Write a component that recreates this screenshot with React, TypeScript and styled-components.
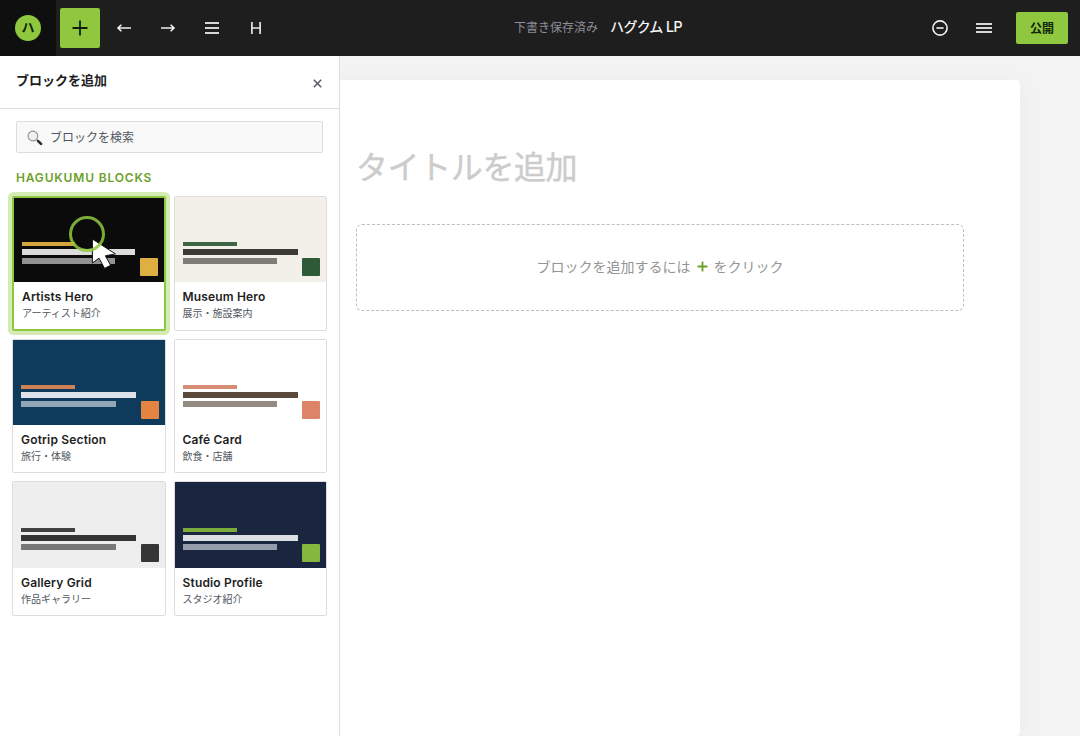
import React from "react";
import styled, { createGlobalStyle } from "styled-components";

const GlobalStyle = createGlobalStyle`
  *, *::before, *::after { box-sizing: border-box; }
  body {
    margin: 0;
    background: #f3f3f3;
    color: #1e1e1e;
    font-family: Inter, "Noto Sans CJK JP", sans-serif;
    font-size: 12px;
    overflow: hidden;
  }
  button { font: inherit; border: 0; padding: 0; background: none; color: inherit; }
`;

const Shell = styled.div`
  display: flex;
  flex-direction: column;
  height: 736px;
`;

const TopBar = styled.header`
  display: flex;
  justify-content: space-between;
  align-items: center;
  height: 56px;
  flex: none;
  background: #1e1e1e;
  color: #fff;
`;

const Tools = styled.div`
  display: flex;
  align-items: center;
  gap: 4px;
`;

const RightTools = styled(Tools)`
  padding-right: 12px;
`;

const LogoCell = styled.div`
  display: grid;
  place-items: center;
  width: 56px;
  height: 56px;
  background: #0f0f0f;
`;

const Logo = styled.div`
  display: grid;
  place-items: center;
  width: 26px;
  height: 26px;
  border-radius: 50%;
  background: #8fc73e;
  color: #10240a;
  font: 700 13px/24px "Noto Sans CJK JP", sans-serif;
  padding-bottom: 2px;
`;

const ToolButton = styled.button<{ $primary?: boolean }>`
  display: grid;
  place-items: center;
  width: 40px;
  height: 40px;
  border-radius: 2px;
  background: ${(p) => (p.$primary ? "#8fc73e" : "transparent")};
  color: ${(p) => (p.$primary ? "#0f1f08" : "#f0f0f0")};
  svg { display: block; }
`;

const DocInfo = styled.div`
  display: flex;
  align-items: center;
  gap: 12px;
`;

const SaveState = styled.span`
  color: #8c8f98;
  font-size: 12px;
  line-height: 18px;
`;

const DocName = styled.span`
  font-size: 14px;
  line-height: 20px;
  font-weight: 400;
  letter-spacing: -0.5px;
  padding-bottom: 2px;
  -webkit-text-stroke: 0.2px currentColor;
`;

const Publish = styled.button`
  width: 52px;
  height: 32px;
  margin-left: 8px;
  border-radius: 2px;
  background: #8fc73e;
  color: #10240a;
  font-weight: 700;
  font-size: 12px;
  line-height: 33px;
`;

const Workspace = styled.div`
  display: flex;
  flex: 1;
  min-height: 0;
`;

const Panel = styled.aside`
  position: relative;
  z-index: 1;
  width: 340px;
  flex: none;
  background: #fff;
  border-right: 1px solid #ddd;
`;

const PanelHeader = styled.div`
  display: flex;
  justify-content: space-between;
  height: 53px;
  padding: 15px 16px 0;
  border-bottom: 1px solid #ddd;
`;

const PanelTitle = styled.h2`
  margin: 0;
  font-size: 13px;
  line-height: 18px;
  font-weight: 700;
`;

const Close = styled.button`
  display: grid;
  place-items: center;
  width: 11px;
  height: 24px;
  color: #50575e;
`;

const Search = styled.div`
  display: flex;
  align-items: center;
  gap: 7px;
  height: 32px;
  margin: 12px 16px 0;
  padding: 1px 10px 0;
  border: 1px solid #ddd;
  border-radius: 2px;
  background: #f9f9f9;
  color: #50575e;
  line-height: 19px;
`;

const Section = styled.h3`
  margin: 17px 16px 10px;
  color: #6c9f2a;
  font-size: 12px;
  line-height: 16px;
  font-weight: 600;
  letter-spacing: 0.83px;
`;

const BlockGrid = styled.div`
  display: grid;
  grid-template-columns: 1fr 1fr;
  gap: 8px;
  padding: 0 12px;
`;

const Card = styled.div<{ $selected?: boolean }>`
  height: 134.7px;
  border: ${(p) => (p.$selected ? "2px solid #8fc73e" : "1px solid #ddd")};
  border-radius: 2px;
  box-shadow: ${(p) => (p.$selected ? "0 0 0 4px #d4ebb5" : "none")};
  background: #fff;
`;

const Preview = styled.div<{ $bg: string }>`
  position: relative;
  display: flex;
  flex-direction: column;
  justify-content: flex-end;
  gap: 3px;
  aspect-ratio: 16 / 9;
  padding: 0 8px 18px;
  background: ${(p) => p.$bg};
`;

const Bar = styled.div<{ $w: number; $h: number; $color: string }>`
  flex: none;
  width: ${(p) => p.$w}%;
  height: ${(p) => p.$h}px;
  background: ${(p) => p.$color};
`;

const Swatch = styled.div<{ $color: string }>`
  position: absolute;
  right: 6px;
  bottom: 6px;
  width: 18px;
  height: 18px;
  border-radius: 1px;
  background: ${(p) => p.$color};
`;

const Pointer = styled.svg`
  position: absolute;
  z-index: 2;
  left: 54px;
  top: 17px;
`;

const Caption = styled.div`
  padding: 7px 8px 0;
`;

const Name = styled.div`
  font-size: 12px;
  line-height: 16px;
  font-weight: 600;
  letter-spacing: 0.17px;
  white-space: nowrap;
`;

const Kind = styled.div`
  margin-top: 1px;
  color: #50575e;
  font-size: 10px;
  line-height: 15px;
`;

const Canvas = styled.main`
  width: 720px;
  height: 656px;
  margin: 24px 0 0 -40px;
  padding: 64px 56px 0;
  border-radius: 4px;
  background: #fff;
  box-shadow: 0 4px 24px rgba(0, 0, 0, 0.04);
`;

const PageTitle = styled.h1`
  margin: 0 0 32px;
  color: #ccc;
  font-size: 32px;
  line-height: 48px;
  font-weight: 400;
  letter-spacing: -0.4px;
  -webkit-text-stroke: 0.4px currentColor;
`;

const Appender = styled.div`
  display: flex;
  align-items: center;
  justify-content: center;
  gap: 6px;
  height: 87px;
  padding-bottom: 2px;
  border: 1px dashed #bfbfbf;
  border-radius: 6px;
  color: #949494;
  font-size: 14px;
  line-height: 20px;
`;

const blocks = [
  { name: "Artists Hero", kind: "アーティスト紹介", bg: "#0b0b0b", bars: ["#d4a53a", "#dcdcdc", "#929292"], swatch: "#deb041", selected: true },
  { name: "Museum Hero", kind: "展示・施設案内", bg: "#f3f0e9", bars: ["#3e6644", "#3b3836", "#7f7c77"], swatch: "#2f5a37" },
  { name: "Gotrip Section", kind: "旅行・体験", bg: "#0e3a5b", bars: ["#cf8054", "#dce1ea", "#91a6b6"], swatch: "#e58343" },
  { name: "Café Card", kind: "飲食・店舗", bg: "#ffffff", bars: ["#d68d75", "#594a3d", "#938a82"], swatch: "#dc8467" },
  { name: "Gallery Grid", kind: "作品ギャラリー", bg: "#eeeeee", bars: ["#404040", "#333333", "#777777"], swatch: "#363636" },
  { name: "Studio Profile", kind: "スタジオ紹介", bg: "#1a2640", bars: ["#7bab3a", "#dcdfe6", "#959cab"], swatch: "#84b73c" },
];

const ClickPointer = () => (
  <Pointer width="52" height="56" viewBox="0 0 52 56" fill="none">
    <path d="M24.4 24V48L31 43.2L36.6 53.4L42.6 50.3L37.4 40.8L47.4 38.9Z" fill="#fff" stroke="#111" strokeWidth="1" strokeLinejoin="round" />
    <circle cx="19" cy="19" r="16.5" stroke="#8fc73e" strokeOpacity="0.86" strokeWidth="3" />
  </Pointer>
);

const Magnifier = () => (
  <svg width="16" height="16" viewBox="0 0 16 16" fill="none">
    <path d="M9.7 9.7L11 11" stroke="#777" strokeWidth="1.5" />
    <path d="M11 11L14.2 14" stroke="#303030" strokeWidth="2.4" strokeLinecap="round" />
    <circle cx="5.9" cy="6" r="4.9" fill="#eef1f2" stroke="#929292" strokeWidth="1.1" />
    <path d="M3 6A3 3 0 0 1 6 3" stroke="#fff" strokeWidth="1" />
  </svg>
);

const Arrow = ({ right }: { right?: boolean }) => (
  <svg width="16" height="16" viewBox="0 0 16 16" fill="none" stroke="currentColor" strokeWidth="1.6">
    {right ? <path d="M1 8H14M10.6 4.7L14 8L10.6 11.3" /> : <path d="M15 8H2M5.4 4.7L2 8L5.4 11.3" />}
  </svg>
);

export default function App() {
  return (
    <Shell>
      <GlobalStyle />
      <TopBar>
        <Tools>
          <LogoCell><Logo>ハ</Logo></LogoCell>
          <ToolButton $primary aria-label="追加">
            <svg width="16" height="16" viewBox="0 0 16 16" stroke="currentColor" strokeWidth="1.8"><path d="M8 0.5V15.5M0.5 8H15.5" /></svg>
          </ToolButton>
          <ToolButton><Arrow /></ToolButton>
          <ToolButton><Arrow right /></ToolButton>
          <ToolButton>
            <svg width="14" height="14" viewBox="0 0 14 14" stroke="#d5d8d5" strokeWidth="1.8"><path d="M0 2H14M0 7H14M0 12H14" /></svg>
          </ToolButton>
          <ToolButton>
            <svg width="10" height="12" viewBox="0 0 10 12" stroke="#e4e7e4" strokeWidth="1.7"><path d="M0.9 0V12M9.1 0V12M0.9 6H9.1" /></svg>
          </ToolButton>
        </Tools>
        <DocInfo>
          <SaveState>下書き保存済み</SaveState>
          <DocName>ハグクム LP</DocName>
        </DocInfo>
        <RightTools>
          <ToolButton>
            <svg width="16" height="16" viewBox="0 0 16 16" fill="none" stroke="currentColor" strokeWidth="1.6"><circle cx="8" cy="8" r="7.1" /><path d="M4.4 8H11.6" /></svg>
          </ToolButton>
          <ToolButton>
            <svg width="16" height="12" viewBox="0 0 16 12" stroke="#d5d8d5" strokeWidth="1.8"><path d="M0 2H16M0 6H16M0 10H16" /></svg>
          </ToolButton>
          <Publish>公開</Publish>
        </RightTools>
      </TopBar>
      <Workspace>
        <Panel>
          <PanelHeader>
            <PanelTitle>ブロックを追加</PanelTitle>
            <Close aria-label="閉じる">
              <svg width="9" height="9" viewBox="0 0 9 9" stroke="currentColor" strokeWidth="1.4"><path d="M0.8 0.8L8.2 8.2M8.2 0.8L0.8 8.2" /></svg>
            </Close>
          </PanelHeader>
          <Search><Magnifier />ブロックを検索</Search>
          <Section>HAGUKUMU BLOCKS</Section>
          <BlockGrid>
            {blocks.map((b) => (
              <Card key={b.name} $selected={b.selected}>
                <Preview $bg={b.bg}>
                  <Bar $w={40} $h={4} $color={b.bars[0]} />
                  <Bar $w={85} $h={6} $color={b.bars[1]} />
                  <Bar $w={70} $h={6} $color={b.bars[2]} />
                  <Swatch $color={b.swatch} />
                  {b.selected && <ClickPointer />}
                </Preview>
                <Caption>
                  <Name>{b.name}</Name>
                  <Kind>{b.kind}</Kind>
                </Caption>
              </Card>
            ))}
          </BlockGrid>
        </Panel>
        <Canvas>
          <PageTitle>タイトルを追加</PageTitle>
          <Appender>
            <span>ブロックを追加するには</span>
            <svg width="11" height="11" viewBox="0 0 11 11" stroke="#6c9f2a" strokeWidth="1.8"><path d="M5.5 0.5V10.5M0.5 5.5H10.5" /></svg>
            <span>をクリック</span>
          </Appender>
        </Canvas>
      </Workspace>
    </Shell>
  );
}
